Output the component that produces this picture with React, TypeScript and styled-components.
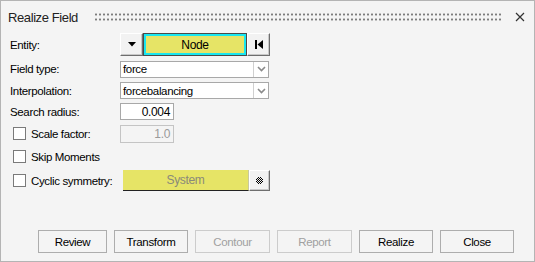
import React from "react";
import styled, { createGlobalStyle } from "styled-components";

const GlobalStyle = createGlobalStyle`
  html, body {
    margin: 0;
    padding: 0;
    background: #f4f4f4;
  }
  * {
    box-sizing: border-box;
  }
`;

//# window frame
const Window = styled.div`
  width: 535px;
  height: 262px;
  display: flex;
  flex-direction: column;
  border: 1px solid #b4b4b4;
  background: #f4f4f4;
  font-family: "Liberation Sans", Arial, sans-serif;
  font-size: 11.5px;
  letter-spacing: -0.35px;
  color: #000;
`;

const TitleBar = styled.div`
  height: 32px;
  display: flex;
  align-items: center;
  padding: 0 9px 0 7px;
`;

const Title = styled.span`
  margin-right: 16px;
  font-size: 13px;
  letter-spacing: -0.4px;
  color: #222;
`;

const Grip = styled.div`
  flex: 1;
  height: 8px;
  margin-right: 13px;
  background-image: radial-gradient(circle, #7d7d7d 1px, transparent 1.2px);
  background-size: 4px 5px;
  background-position: 0 -1px;
`;

const CloseIcon = styled.svg`
  width: 10px;
  height: 10px;
  stroke: #333;
  stroke-width: 1.2;
`;

//# form
const Form = styled.div`
  display: flex;
  flex-direction: column;
  gap: 4px;
  padding-left: 9px;
`;

const Row = styled.div<{ $h: number }>`
  height: ${({ $h }) => $h}px;
  display: grid;
  grid-template-columns: 110px auto;
  align-items: center;
`;

const Label = styled.span`
  white-space: nowrap;
`;

const CheckLabel = styled.label`
  display: flex;
  align-items: center;
  gap: 5px;
  padding-left: 3px;
  white-space: nowrap;
`;

const Box = styled.span`
  width: 13px;
  height: 13px;
  border: 1px solid #7a7a7a;
  background: #fff;
`;

const Group = styled.div`
  display: flex;
  align-items: stretch;
  height: 100%;
`;

const BevelButton = styled.div<{ $w: number }>`
  width: ${({ $w }) => $w}px;
  display: flex;
  align-items: center;
  justify-content: center;
  background: #f2f2f2;
  border-top: 1px solid #fff;
  border-left: 1px solid #fff;
  border-right: 1px solid #6e6e6e;
  border-bottom: 1px solid #6e6e6e;
  box-shadow: inset -1px -1px 0 #c8c8c8;
`;

const EntityButton = styled.div`
  width: 104px;
  display: flex;
  align-items: center;
  justify-content: center;
  background: #e6e466;
  border: 1px solid #4a4a4a;
  box-shadow: inset 0 0 0 2px #17e6f0;
  font-size: 12px;
`;

const SystemButton = styled.div`
  width: 126px;
  margin-left: 3px;
  display: flex;
  align-items: center;
  justify-content: center;
  background: #e6e466;
  border-bottom: 1px solid #222;
  border-right: 1px solid #c8c8a0;
  color: #8a8a7a;
  font-size: 12px;
`;

const Select = styled.div`
  width: 149px;
  height: 17px;
  display: flex;
  align-items: center;
  background: #fff;
  border: 1px solid #a8a8a8;
`;

const SelectText = styled.span`
  flex: 1;
  padding-left: 2px;
`;

const SelectArrow = styled.span`
  width: 15px;
  height: 100%;
  display: flex;
  align-items: center;
  justify-content: center;
  border-left: 1px solid #d0d0d0;
`;

const NumberBox = styled.div<{ $disabled?: boolean }>`
  width: 54px;
  height: ${({ $disabled }) => ($disabled ? 18 : 17)}px;
  display: flex;
  align-items: center;
  justify-content: flex-end;
  padding-right: 3px;
  font-size: 12px;
  background: ${({ $disabled }) => ($disabled ? "#f4f4f4" : "#fff")};
  border: 1px solid ${({ $disabled }) => ($disabled ? "#c4c4c4" : "#a8a8a8")};
  color: ${({ $disabled }) => ($disabled ? "#9a9a9a" : "#000")};
`;

//# footer
const Footer = styled.div`
  margin-top: auto;
  display: flex;
  justify-content: flex-end;
  gap: 7px;
  padding: 0 20px 8px 0;
`;

const DialogButton = styled.div<{ $w: number; $disabled?: boolean }>`
  width: ${({ $w }) => $w}px;
  height: 23px;
  display: flex;
  align-items: center;
  justify-content: center;
  font-size: 11.5px;
  border: 1px solid ${({ $disabled }) => ($disabled ? "#cccccc" : "#adadad")};
  color: ${({ $disabled }) => ($disabled ? "#a0a0a0" : "#000")};
  background: #f4f4f4;
`;

function DownTriangle() {
  return (
    <svg width="8" height="5" viewBox="0 0 8 5">
      <path d="M0 0H8L4 4.5Z" fill="#000" />
    </svg>
  );
}

function FirstIcon() {
  return (
    <svg width="8" height="9" viewBox="0 0 8 9">
      <rect x="0" y="0" width="2" height="9" fill="#000" />
      <path d="M8 0V9L2.5 4.5Z" fill="#000" />
    </svg>
  );
}

function Chevron() {
  return (
    <svg width="9" height="6" viewBox="0 0 9 6">
      <path d="M1 1L4.5 4.5L8 1" fill="none" stroke="#8a8a8a" strokeWidth="1.6" />
    </svg>
  );
}

function CheckerIcon() {
  const cells = [];
  for (let y = 0; y < 7; y++) {
    for (let x = 0; x < 7; x++) {
      if ((x + y) % 2 === 0 && Math.abs(x - 3) + Math.abs(y - 3) <= 4) {
        cells.push(<rect key={`${x}-${y}`} x={x} y={y} width="1" height="1" fill="#000" />);
      }
    }
  }
  return (
    <svg width="7" height="7" viewBox="0 0 7 7">
      {cells}
    </svg>
  );
}

export default function App() {
  return (
    <>
      <GlobalStyle />
      <Window>
        <TitleBar>
          <Title>Realize Field</Title>
          <Grip />
          <CloseIcon viewBox="0 0 10 10">
            <path d="M1 1L9 9M9 1L1 9" />
          </CloseIcon>
        </TitleBar>

        <Form>
          <Row $h={23}>
            <Label>Entity:</Label>
            <Group>
              <BevelButton $w={23}>
                <DownTriangle />
              </BevelButton>
              <EntityButton>Node</EntityButton>
              <BevelButton $w={23}>
                <FirstIcon />
              </BevelButton>
            </Group>
          </Row>
          <Row $h={18}>
            <Label>Field type:</Label>
            <Select>
              <SelectText>force</SelectText>
              <SelectArrow>
                <Chevron />
              </SelectArrow>
            </Select>
          </Row>
          <Row $h={17}>
            <Label>Interpolation:</Label>
            <Select>
              <SelectText>forcebalancing</SelectText>
              <SelectArrow>
                <Chevron />
              </SelectArrow>
            </Select>
          </Row>
          <Row $h={17}>
            <Label>Search radius:</Label>
            <NumberBox>0.004</NumberBox>
          </Row>
          <Row $h={19}>
            <CheckLabel>
              <Box />
              Scale factor:
            </CheckLabel>
            <NumberBox $disabled>1.0</NumberBox>
          </Row>
          <Row $h={19}>
            <CheckLabel>
              <Box />
              Skip Moments
            </CheckLabel>
          </Row>
          <Row $h={21}>
            <CheckLabel>
              <Box />
              Cyclic symmetry:
            </CheckLabel>
            <Group>
              <SystemButton>System</SystemButton>
              <BevelButton $w={21}>
                <CheckerIcon />
              </BevelButton>
            </Group>
          </Row>
        </Form>

        <Footer>
          <DialogButton $w={69}>Review</DialogButton>
          <DialogButton $w={74}>Transform</DialogButton>
          <DialogButton $w={75} $disabled>Contour</DialogButton>
          <DialogButton $w={75} $disabled>Report</DialogButton>
          <DialogButton $w={74}>Realize</DialogButton>
          <DialogButton $w={74}>Close</DialogButton>
        </Footer>
      </Window>
    </>
  );
}
